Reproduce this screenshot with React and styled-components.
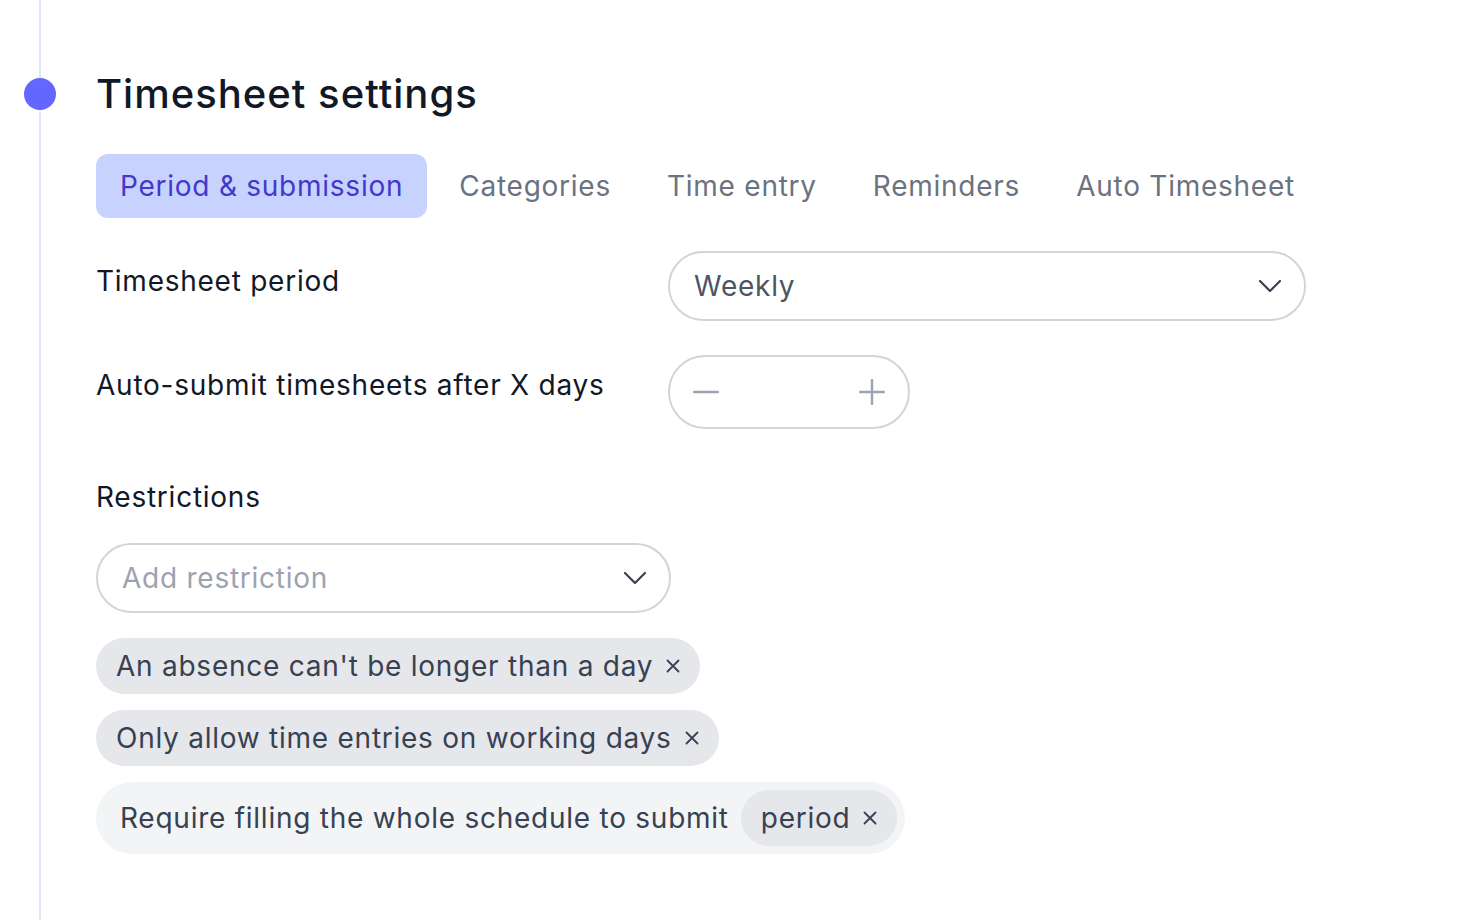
import React from "react";
import styled, { createGlobalStyle } from "styled-components";

const GlobalStyle = createGlobalStyle`
  html, body {
    margin: 0;
    padding: 0;
    background: #ffffff;
  }
  body {
    font-family: Inter, "Open Sans", sans-serif;
    letter-spacing: 0.75px;
    color: #111827;
  }
`;

const Page = styled.div`
  display: flex;
  min-height: 920px;
`;

const Rail = styled.div`
  width: 80px;
  flex-shrink: 0;
  display: flex;
  flex-direction: column;
  align-items: center;
  background: linear-gradient(#e0e7ff, #e0e7ff) no-repeat center / 2px 100%;
`;

const Dot = styled.div`
  width: 32px;
  height: 32px;
  margin-top: 78px;
  border-radius: 50%;
  background: #6366ff;
`;

const Content = styled.div`
  padding: 70px 0 0 16px;
  display: flex;
  flex-direction: column;
`;

const Title = styled.h1`
  margin: 0;
  font-size: 40px;
  line-height: 48px;
  font-weight: 500;
  letter-spacing: 1px;
  color: #111827;
`;

const Tabs = styled.div`
  display: flex;
  gap: 8px;
  margin-top: 36px;
`;

const Tab = styled.button`
  height: 64px;
  padding: 0 24px;
  border: none;
  border-radius: 12px;
  font-family: inherit;
  letter-spacing: inherit;
  font-size: 28px;
  font-weight: 400;
  cursor: pointer;
  background: ${(p) => (p.active ? "#c7d2fe" : "transparent")};
  color: ${(p) => (p.active ? "#4338ca" : "#6b7280")};
`;

const Form = styled.div`
  display: grid;
  grid-template-columns: 572px auto;
  row-gap: 34px;
  margin-top: 33px;
  align-items: start;
`;

const Label = styled.div`
  padding-top: 10px;
  font-size: 28px;
  line-height: 40px;
  color: #111827;
`;

const Select = styled.div`
  box-sizing: border-box;
  width: ${(p) => p.w};
  height: 70px;
  border: 2px solid #d1d5db;
  border-radius: 999px;
  padding: 0 22px 0 24px;
  display: flex;
  align-items: center;
  justify-content: space-between;
  font-size: 28px;
  color: ${(p) => (p.placeholder ? "#9ca3af" : "#4b5563")};
`;

const Stepper = styled.div`
  box-sizing: border-box;
  width: 242px;
  height: 74px;
  border: 2px solid #d1d5db;
  border-radius: 999px;
  padding: 0 23px;
  display: flex;
  align-items: center;
  justify-content: space-between;
  color: #9ca3af;
`;

const Section = styled.div`
  display: flex;
  flex-direction: column;
  margin-top: 48px;
`;

const SectionTitle = styled.div`
  font-size: 28px;
  line-height: 40px;
  color: #111827;
  margin-bottom: 26px;
`;

const ChipList = styled.div`
  display: flex;
  flex-direction: column;
  align-items: flex-start;
  gap: 16px;
  margin-top: 25px;
`;

const Chip = styled.div`
  height: 56px;
  padding: 0 20px;
  border-radius: 999px;
  background: #e5e7eb;
  display: flex;
  align-items: center;
  gap: 13px;
  font-size: 28px;
  color: #374151;
`;

const Group = styled.div`
  height: 72px;
  box-sizing: border-box;
  padding: 8px 8px 8px 24px;
  border-radius: 999px;
  background: #f3f4f6;
  display: flex;
  align-items: center;
  gap: 12px;
  font-size: 28px;
  color: #374151;
`;

const Chevron = () => (
  <svg width="24" height="14" viewBox="0 0 24 14" fill="none">
    <path d="M2 2l10 10 10-10" stroke="#374151" strokeWidth="2.2" strokeLinecap="round" strokeLinejoin="round" />
  </svg>
);

const Close = () => (
  <svg width="14" height="14" viewBox="0 0 14 14" fill="none">
    <path d="M1.5 1.5l11 11M12.5 1.5l-11 11" stroke="#374151" strokeWidth="1.8" strokeLinecap="round" />
  </svg>
);

const Minus = () => (
  <svg width="26" height="26" viewBox="0 0 26 26" fill="none">
    <path d="M1 13h24" stroke="#9ca3af" strokeWidth="2.4" strokeLinecap="round" />
  </svg>
);

const Plus = () => (
  <svg width="26" height="26" viewBox="0 0 26 26" fill="none">
    <path d="M1 13h24M13 1v24" stroke="#9ca3af" strokeWidth="2.4" strokeLinecap="round" />
  </svg>
);

const tabs = ["Period & submission", "Categories", "Time entry", "Reminders", "Auto Timesheet"];

export default function App() {
  return (
    <>
      <GlobalStyle />
      <Page>
        <Rail>
          <Dot />
        </Rail>
        <Content>
          <Title>Timesheet settings</Title>
          <Tabs>
            {tabs.map((t, i) => (
              <Tab key={t} active={i === 0}>
                {t}
              </Tab>
            ))}
          </Tabs>
          <Form>
            <Label>Timesheet period</Label>
            <Select w="638px">
              <span>Weekly</span>
              <Chevron />
            </Select>
            <Label>Auto-submit timesheets after X days</Label>
            <Stepper>
              <Minus />
              <Plus />
            </Stepper>
          </Form>
          <Section>
            <SectionTitle>Restrictions</SectionTitle>
            <Select w="575px" placeholder>
              <span>Add restriction</span>
              <Chevron />
            </Select>
            <ChipList>
              <Chip>
                An absence can't be longer than a day <Close />
              </Chip>
              <Chip>
                Only allow time entries on working days <Close />
              </Chip>
              <Group>
                Require filling the whole schedule to submit
                <Chip>
                  period <Close />
                </Chip>
              </Group>
            </ChipList>
          </Section>
        </Content>
      </Page>
    </>
  );
}
